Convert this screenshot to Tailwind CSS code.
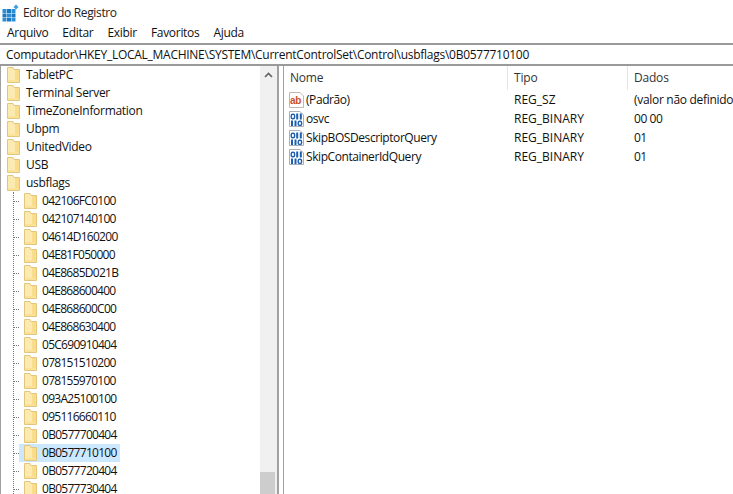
<!DOCTYPE html>
<html lang="pt-BR">
<head>
  <meta charset="UTF-8" />
  <title>Editor do Registro</title>
  <script src="https://cdn.jsdelivr.net/npm/@tailwindcss/browser@4"></script>
</head>
<body class="bg-white w-[733px] h-[494px] overflow-hidden text-[12px] leading-[18px] text-[#111] font-['Open_Sans',sans-serif]">

  <svg class="hidden">
    <symbol id="folder" viewBox="0 0 13 16">
      <path d="M0.5 0.5 H6 L7 2.5 H12.5 V15.5 H0.5 Z" fill="#fdeab0" stroke="#e2c67c" stroke-width="1"/>
      <path d="M8 3 H12 V15 H8 Z" fill="#f9dd8c"/>
      <path d="M1 13 H12 V15 H1 Z" fill="#fbe299"/>
    </symbol>
    <symbol id="bin" viewBox="0 0 15 16">
      <path d="M0.5 0.5 H11 L14.5 4 V15.5 H0.5 Z" fill="#fff" stroke="#a9b0ba"/>
      <rect x="2.2" y="3.2" width="3.4" height="4.6" rx="1.5" fill="none" stroke="#1d5fae" stroke-width="1.4"/>
      <rect x="7.2" y="2.5" width="2" height="6" fill="#1d5fae"/>
      <rect x="10.8" y="2.5" width="2" height="6" fill="#1d5fae"/>
      <rect x="2" y="9.5" width="2" height="5.5" fill="#1d5fae"/>
      <rect x="5.5" y="9.5" width="2" height="5.5" fill="#1d5fae"/>
      <rect x="9.2" y="10.2" width="3.4" height="4.2" rx="1.5" fill="none" stroke="#1d5fae" stroke-width="1.4"/>
    </symbol>
  </svg>

  <!-- Title bar -->
  <div class="flex items-center h-[24px] pt-[1px] pl-[2px] gap-[4px]">
    <svg class="w-[17px] h-[18px]" viewBox="0 0 17 18">
      <rect x="0.5" y="5" width="4" height="4" fill="#2a8fd6"/>
      <rect x="5" y="5" width="4" height="4" fill="#1b78c2"/>
      <rect x="9.5" y="5" width="4" height="4" fill="#2a8fd6"/>
      <rect x="0.5" y="9.5" width="4" height="4" fill="#1b78c2"/>
      <rect x="5" y="9.5" width="4" height="4" fill="#2a8fd6"/>
      <rect x="9.5" y="9.5" width="4" height="4" fill="#1b78c2"/>
      <rect x="0.5" y="14" width="4" height="3.5" fill="#2a8fd6"/>
      <rect x="5" y="14" width="4" height="3.5" fill="#1b78c2"/>
      <rect x="9.5" y="14" width="4" height="3.5" fill="#2a8fd6"/>
      <path d="M14 0.5 l2.5 2.5 -2.5 2.5 -2.5 -2.5 Z" fill="#3aa0e0"/>
    </svg>
    <span class="text-[#222] tracking-[-0.35px]">Editor do Registro</span>
  </div>

  <!-- Menu -->
  <div class="flex h-[18px] mb-[1px] items-center pl-[7px] gap-[14px] tracking-[-0.3px]">
    <span>Arquivo</span><span>Editar</span><span>Exibir</span><span>Favoritos</span><span>Ajuda</span>
  </div>

  <!-- Address bar -->
  <div class="h-[23px] bg-white border-y-2 border-y-[#9a9a9a] flex items-center pl-[6px] whitespace-nowrap tracking-[-0.27px]">Computador\HKEY_LOCAL_MACHINE\SYSTEM\CurrentControlSet\Control\usbflags\0B0577710100</div>

  <div class="flex h-[429px]">
    <!-- Tree -->
    <div class="w-[279px] shrink-0 flex border-l border-l-[#a0a0a0] border-r-2 border-r-[#a0a0a0] overflow-hidden tracking-[-0.3px]">
      <div class="w-[259px] shrink-0 pl-[6px]">
        <div class="h-[18px] flex items-center gap-[6px]"><svg class="w-[13px] h-[16px]"><use href="#folder"/></svg>TabletPC</div>
        <div class="h-[18px] flex items-center gap-[6px]"><svg class="w-[13px] h-[16px]"><use href="#folder"/></svg>Terminal Server</div>
        <div class="h-[18px] flex items-center gap-[6px]"><svg class="w-[13px] h-[16px]"><use href="#folder"/></svg>TimeZoneInformation</div>
        <div class="h-[18px] flex items-center gap-[6px]"><svg class="w-[13px] h-[16px]"><use href="#folder"/></svg>Ubpm</div>
        <div class="h-[18px] flex items-center gap-[6px]"><svg class="w-[13px] h-[16px]"><use href="#folder"/></svg>UnitedVideo</div>
        <div class="h-[18px] flex items-center gap-[6px]"><svg class="w-[13px] h-[16px]"><use href="#folder"/></svg>USB</div>
        <div class="h-[18px] flex items-center gap-[6px]"><svg class="w-[13px] h-[16px]"><use href="#folder"/></svg>usbflags</div>
        <div class="border-l border-dotted border-l-[#777] ml-[6px] tracking-[-0.72px]">
          <div class="h-[18px] flex items-center"><span class="w-[5px] border-t border-dotted border-t-[#777]"></span><span class="h-[18px] flex items-center gap-[5px] pl-[5px] pr-[3px]"><svg class="w-[13px] h-[16px]"><use href="#folder"/></svg>042106FC0100</span></div>
          <div class="h-[18px] flex items-center"><span class="w-[5px] border-t border-dotted border-t-[#777]"></span><span class="h-[18px] flex items-center gap-[5px] pl-[5px] pr-[3px]"><svg class="w-[13px] h-[16px]"><use href="#folder"/></svg>042107140100</span></div>
          <div class="h-[18px] flex items-center"><span class="w-[5px] border-t border-dotted border-t-[#777]"></span><span class="h-[18px] flex items-center gap-[5px] pl-[5px] pr-[3px]"><svg class="w-[13px] h-[16px]"><use href="#folder"/></svg>04614D160200</span></div>
          <div class="h-[18px] flex items-center"><span class="w-[5px] border-t border-dotted border-t-[#777]"></span><span class="h-[18px] flex items-center gap-[5px] pl-[5px] pr-[3px]"><svg class="w-[13px] h-[16px]"><use href="#folder"/></svg>04E81F050000</span></div>
          <div class="h-[18px] flex items-center"><span class="w-[5px] border-t border-dotted border-t-[#777]"></span><span class="h-[18px] flex items-center gap-[5px] pl-[5px] pr-[3px]"><svg class="w-[13px] h-[16px]"><use href="#folder"/></svg>04E8685D021B</span></div>
          <div class="h-[18px] flex items-center"><span class="w-[5px] border-t border-dotted border-t-[#777]"></span><span class="h-[18px] flex items-center gap-[5px] pl-[5px] pr-[3px]"><svg class="w-[13px] h-[16px]"><use href="#folder"/></svg>04E868600400</span></div>
          <div class="h-[18px] flex items-center"><span class="w-[5px] border-t border-dotted border-t-[#777]"></span><span class="h-[18px] flex items-center gap-[5px] pl-[5px] pr-[3px]"><svg class="w-[13px] h-[16px]"><use href="#folder"/></svg>04E868600C00</span></div>
          <div class="h-[18px] flex items-center"><span class="w-[5px] border-t border-dotted border-t-[#777]"></span><span class="h-[18px] flex items-center gap-[5px] pl-[5px] pr-[3px]"><svg class="w-[13px] h-[16px]"><use href="#folder"/></svg>04E868630400</span></div>
          <div class="h-[18px] flex items-center"><span class="w-[5px] border-t border-dotted border-t-[#777]"></span><span class="h-[18px] flex items-center gap-[5px] pl-[5px] pr-[3px]"><svg class="w-[13px] h-[16px]"><use href="#folder"/></svg>05C690910404</span></div>
          <div class="h-[18px] flex items-center"><span class="w-[5px] border-t border-dotted border-t-[#777]"></span><span class="h-[18px] flex items-center gap-[5px] pl-[5px] pr-[3px]"><svg class="w-[13px] h-[16px]"><use href="#folder"/></svg>078151510200</span></div>
          <div class="h-[18px] flex items-center"><span class="w-[5px] border-t border-dotted border-t-[#777]"></span><span class="h-[18px] flex items-center gap-[5px] pl-[5px] pr-[3px]"><svg class="w-[13px] h-[16px]"><use href="#folder"/></svg>078155970100</span></div>
          <div class="h-[18px] flex items-center"><span class="w-[5px] border-t border-dotted border-t-[#777]"></span><span class="h-[18px] flex items-center gap-[5px] pl-[5px] pr-[3px]"><svg class="w-[13px] h-[16px]"><use href="#folder"/></svg>093A25100100</span></div>
          <div class="h-[18px] flex items-center"><span class="w-[5px] border-t border-dotted border-t-[#777]"></span><span class="h-[18px] flex items-center gap-[5px] pl-[5px] pr-[3px]"><svg class="w-[13px] h-[16px]"><use href="#folder"/></svg>095116660110</span></div>
          <div class="h-[18px] flex items-center"><span class="w-[5px] border-t border-dotted border-t-[#777]"></span><span class="h-[18px] flex items-center gap-[5px] pl-[5px] pr-[3px]"><svg class="w-[13px] h-[16px]"><use href="#folder"/></svg>0B0577700404</span></div>
          <div class="h-[18px] flex items-center"><span class="w-[5px] border-t border-dotted border-t-[#777]"></span><span class="h-[18px] flex items-center gap-[5px] pl-[5px] pr-[3px] bg-[#cce8ff]"><svg class="w-[13px] h-[16px]"><use href="#folder"/></svg>0B0577710100</span></div>
          <div class="h-[18px] flex items-center"><span class="w-[5px] border-t border-dotted border-t-[#777]"></span><span class="h-[18px] flex items-center gap-[5px] pl-[5px] pr-[3px]"><svg class="w-[13px] h-[16px]"><use href="#folder"/></svg>0B0577720404</span></div>
          <div class="h-[18px] flex items-center"><span class="w-[5px] border-t border-dotted border-t-[#777]"></span><span class="h-[18px] flex items-center gap-[5px] pl-[5px] pr-[3px]"><svg class="w-[13px] h-[16px]"><use href="#folder"/></svg>0B0577730404</span></div>
        </div>
      </div>
      <!-- Scrollbar -->
      <div class="w-[17px] shrink-0 bg-[#f0f0f0] flex flex-col">
        <div class="h-[18px] flex items-center justify-center">
          <svg class="w-[9px] h-[6px]" viewBox="0 0 9 6"><path d="M1 5 L4.5 1.5 L8 5" fill="none" stroke="#606060" stroke-width="1.6"/></svg>
        </div>
        <div class="mt-auto h-[23px] w-[15px] bg-[#cdcdcd]"></div>
      </div>
    </div>

    <!-- List -->
    <div class="flex-1 ml-[4px] border-l border-l-[#a0a0a0] min-w-0 overflow-hidden">
      <div class="flex h-[24px] text-[#333] tracking-[-0.2px]">
        <div class="w-[224px] pl-[6px] flex items-center border-r border-r-[#e5e5e5]">Nome</div>
        <div class="w-[120px] pl-[6px] flex items-center border-r border-r-[#e5e5e5]">Tipo</div>
        <div class="pl-[6px] flex items-center">Dados</div>
      </div>
      <div class="grid grid-cols-[224px_120px_1fr] auto-rows-[19px] whitespace-nowrap">
        <div class="flex items-center gap-[2px] pl-[5px] tracking-[-0.42px]">
          <svg class="w-[15px] h-[16px]" viewBox="0 0 15 16">
            <path d="M0.5 0.5 H11 L14.5 4 V15.5 H0.5 Z" fill="#fff" stroke="#c4b6ac"/>
            <text x="1" y="11.5" font-size="10" font-weight="700" fill="#c8502a" font-family="Liberation Sans">ab</text>
          </svg>(Padrão)</div>
        <div class="flex items-center pl-[6px]">REG_SZ</div>
        <div class="flex items-center pl-[6px] tracking-[-0.3px]">(valor não definido)</div>
        <div class="flex items-center gap-[2px] pl-[5px] tracking-[-0.42px]"><svg class="w-[15px] h-[16px]"><use href="#bin"/></svg>osvc</div>
        <div class="flex items-center pl-[6px]">REG_BINARY</div>
        <div class="flex items-center pl-[6px] tracking-[-0.45px]">00 00</div>
        <div class="flex items-center gap-[2px] pl-[5px] tracking-[-0.42px]"><svg class="w-[15px] h-[16px]"><use href="#bin"/></svg>SkipBOSDescriptorQuery</div>
        <div class="flex items-center pl-[6px]">REG_BINARY</div>
        <div class="flex items-center pl-[6px] tracking-[-0.6px]">01</div>
        <div class="flex items-center gap-[2px] pl-[5px] tracking-[-0.42px]"><svg class="w-[15px] h-[16px]"><use href="#bin"/></svg>SkipContainerIdQuery</div>
        <div class="flex items-center pl-[6px]">REG_BINARY</div>
        <div class="flex items-center pl-[6px] tracking-[-0.6px]">01</div>
      </div>
    </div>
  </div>
</body>
</html>
